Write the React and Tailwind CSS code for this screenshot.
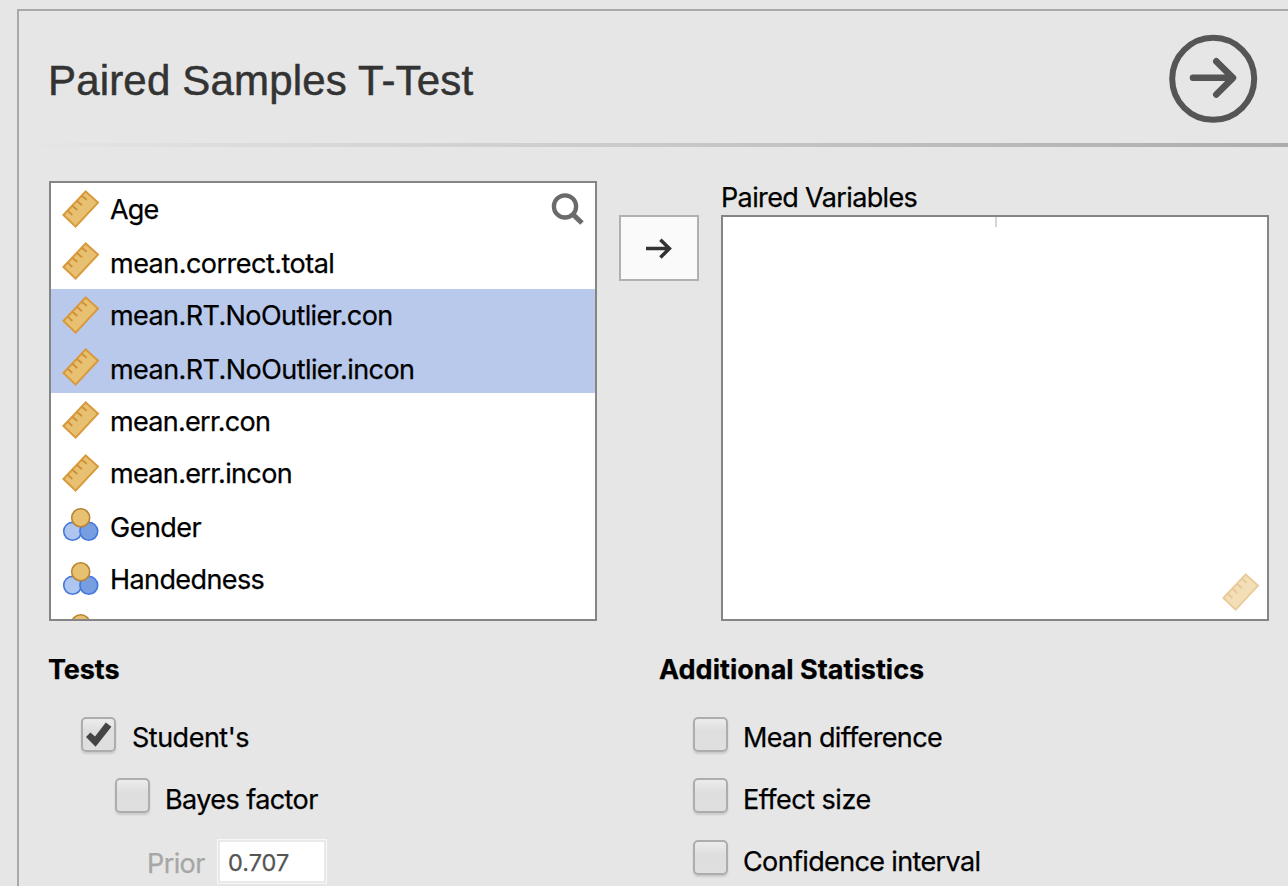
import React from "react";

function Ruler({ className = "" }) {
  return (
    <svg width="38" height="40" viewBox="0 0 38 40" className={`shrink-0 ${className}`}>
      <path d="M23.7 2.4 36 13.6 13.6 37.6 1.4 26Z" fill="#e7c071" stroke="#d9993b" strokeWidth="2" />
      <path d="m5.7 21.7 4.6 4.3M10.3 16.7l5 4.3M15 12l5 4.3M19.7 6.7l5 4" stroke="#cf9036" strokeWidth="1.8" fill="none" />
    </svg>
  );
}

function Nominal({ className = "" }) {
  return (
    <svg width="38" height="40" viewBox="0 0 38 40" className={`shrink-0 ${className}`}>
      <circle cx="10.6" cy="25.3" r="8.9" fill="#aec6ef" stroke="#4478dc" strokeWidth="1.6" />
      <circle cx="26.8" cy="25.3" r="8.9" fill="#789ee2" stroke="#4478dc" strokeWidth="1.6" />
      <circle cx="18.7" cy="11.7" r="9" fill="#e7c071" stroke="#b98532" strokeWidth="1.6" />
    </svg>
  );
}

const variables = [
  { name: "Age", row: "h-[53px]", icon: "mt-[6px]", label: "mt-[11px] tracking-[-0.9px]" },
  { name: "mean.correct.total", row: "h-[53px]", icon: "mt-[5px]", label: "mt-[12px] tracking-[-0.52px]" },
  { name: "mean.RT.NoOutlier.con", row: "h-[52px] bg-[#b9c9ec]", icon: "mt-[6px]", label: "mt-[11px] tracking-[-0.58px]" },
  { name: "mean.RT.NoOutlier.incon", row: "h-[52px] bg-[#b9c9ec]", icon: "mt-[6px]", label: "mt-[13px] tracking-[-0.56px]" },
  { name: "mean.err.con", row: "h-[53px]", icon: "mt-[7px]", label: "mt-[13px] tracking-[-0.7px]" },
  { name: "mean.err.incon", row: "h-[53px]", icon: "mt-[7px]", label: "mt-[12px] tracking-[-0.66px]" },
  { name: "Gender", nominal: true, row: "h-[53px]", icon: "mt-[7px]", label: "mt-[13px] tracking-[-0.5px]" },
  { name: "Handedness", nominal: true, row: "h-[53px]", icon: "mt-[8px]", label: "mt-[12px] tracking-[-0.6px]" },
  { name: "", nominal: true, row: "h-[53px]", icon: "mt-[7px]", label: "" },
];

function Check({ label, checked, className = "", labelClass = "" }) {
  return (
    <div className={`flex h-[36px] items-start ${className}`}>
      <span className="mt-px flex size-[35px] shrink-0 items-center justify-center rounded-[5px] border-2 border-[#adadad] bg-linear-to-b from-[#ececec] via-[#dedede] via-40% to-[#dfdfdf] shadow-[0_2px_2px_rgba(0,0,0,0.12)]">
        {checked && (
          <svg width="31" height="31" viewBox="0 0 31 31" className="shrink-0">
            <path d="m3 17.9 4.4-4.3 4.6 4L22.8 3.6l5.6 4.1L12.6 27.7Z" fill="#444" />
          </svg>
        )}
      </span>
      <span className={`whitespace-nowrap leading-8 ${labelClass}`}>{label}</span>
    </div>
  );
}

export default function App() {
  return (
    <div className="h-[886px] w-[1288px] overflow-hidden bg-[#e6e6e6] pt-[9px] pl-[17px] font-['Inter','Liberation_Sans',sans-serif] text-[27px] text-black [-webkit-text-stroke:0.25px]">
      <div className="h-[877px] border-t-2 border-l-2 border-[#a9a9a9]">
        <header className="flex h-[132px] items-start justify-between pr-[30px] pl-[29px]">
          <h1 className="mt-[46px] font-['Liberation_Sans',sans-serif] text-[42px] leading-[48px] tracking-[0.17px] whitespace-nowrap text-[#333] [-webkit-text-stroke:0.5px]">
            Paired Samples T-Test
          </h1>
          <svg width="90" height="90" viewBox="0 0 90 90" fill="none" stroke="#555" strokeWidth="6" className="mt-[23px]">
            <circle cx="45.2" cy="44.8" r="41" />
            <path d="M25 43.8h38M48.3 27.3 65 43.8 48.3 60.5" strokeWidth="6.6" strokeLinecap="round" strokeLinejoin="round" />
          </svg>
        </header>
        <div className="h-1 bg-linear-to-r from-[#e6e6e6] to-[#adadad]" />

        <section className="mt-[34px] flex h-[440px] items-start pl-[30px]">
          <div className="relative h-[440px] w-[548px] overflow-hidden border-2 border-[#858585] bg-white">
            {variables.map((v, i) => (
              <div key={i} className={`flex items-start pl-[11px] ${v.row}`}>
                {v.nominal ? <Nominal className={v.icon} /> : <Ruler className={v.icon} />}
                <span className={`ml-[10px] leading-8 whitespace-nowrap ${v.label}`}>{v.name}</span>
              </div>
            ))}
            <svg width="36" height="36" viewBox="0 0 36 36" fill="none" stroke="#6a6a6a" className="absolute top-[9px] right-[9px]">
              <circle cx="15" cy="14.4" r="11.1" strokeWidth="4.3" />
              <path d="m21.8 21.4 10.2 9.6" strokeWidth="5" />
            </svg>
          </div>
          <button className="mt-[34px] ml-[22px] flex h-[66px] w-[80px] items-center justify-center border-2 border-[#b0b0b0] bg-[#fafafa]">
            <svg width="30" height="24" viewBox="0 0 30 24" fill="none" stroke="#333" strokeWidth="3.5">
              <path d="M2 12.6h24M16.4 3.7l9 8.9-9 8.9" />
            </svg>
          </button>
          <div className="ml-[22px] w-[548px]">
            <div className="h-[34px] pt-px leading-8 tracking-[-0.63px]">Paired Variables</div>
            <div className="flex h-[406px] flex-col items-end justify-between border-2 border-[#858585] bg-white">
              <span className="mr-[270px] h-[10px] w-[2px] bg-[#d6d6d6]" />
              <Ruler className="mr-[7px] mb-[7px] opacity-50" />
            </div>
          </div>
        </section>

        <section className="grid grid-cols-[611px_1fr] pt-[33px] pl-[30px]">
          <div>
            <h2 className="-ml-px leading-8 font-bold tracking-[-0.1px]">Tests</h2>
            <Check label="Student's" checked className="mt-[30px] ml-[32px]" labelClass="mt-[6px] ml-[16px] tracking-[-0.5px]" />
            <Check label="Bayes factor" className="mt-[25px] ml-[66px]" labelClass="mt-[7px] ml-[15px] tracking-[-0.58px]" />
            <div className="mt-[26px] ml-[98px] flex items-start">
              <span className="mt-[9px] w-[70px] leading-8 tracking-[-0.6px] text-[#a6a6a6]">Prior</span>
              <div className="h-[45px] w-[110px] border border-[#f7f7f7] bg-white">
                <div className="h-[43px] border-2 border-[#e9e9e9] pt-[5px] pl-[8px] text-[23.5px] leading-8 tracking-[0px] text-[#555]">0.707</div>
              </div>
            </div>
          </div>
          <div>
            <h2 className="-ml-px leading-8 font-bold tracking-[0.02px]">Additional Statistics</h2>
            <Check label="Mean difference" className="mt-[30px] ml-[33px]" labelClass="mt-[6px] ml-[15px] tracking-[-0.64px]" />
            <Check label="Effect size" className="mt-[25px] ml-[33px]" labelClass="mt-[7px] ml-[15px] tracking-[-0.48px]" />
            <Check label="Confidence interval" className="mt-[26px] ml-[33px]" labelClass="mt-[7px] ml-[15px] tracking-[-0.64px]" />
          </div>
        </section>
      </div>
    </div>
  );
}
